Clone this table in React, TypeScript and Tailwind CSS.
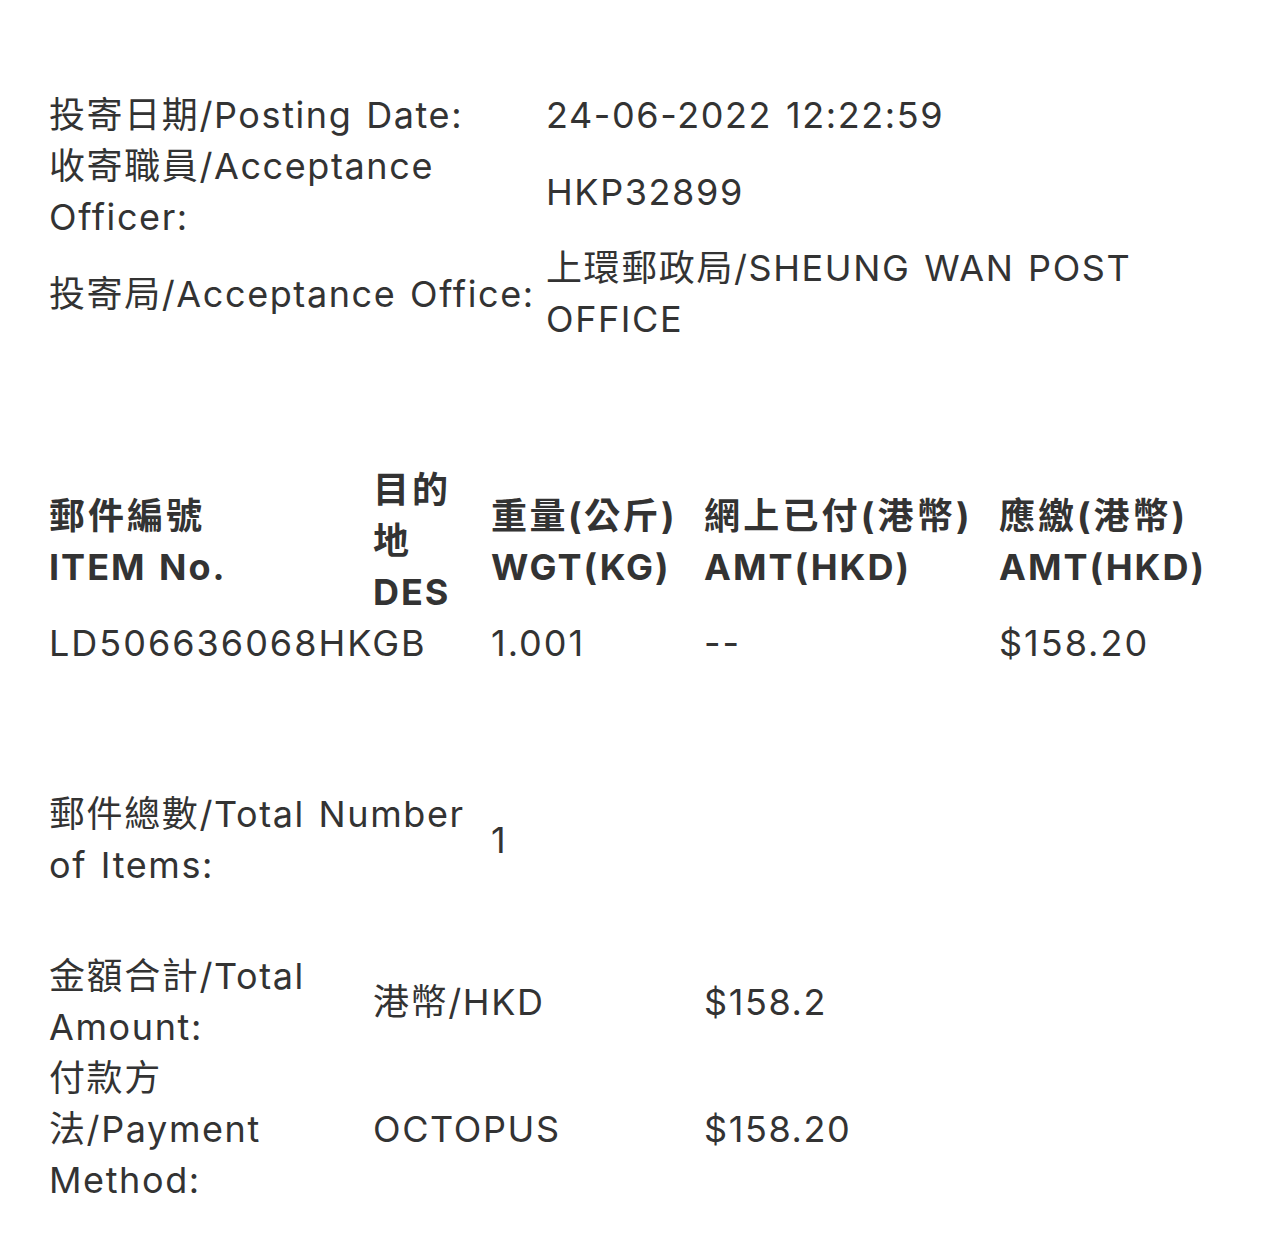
import React from "react";

const font = {
  fontFamily:
    '"Inter", "Noto Sans CJK TC", "Noto Sans", sans-serif',
};

function App() {
  return (
    <div
      className="min-h-[1248px] w-[1284px] bg-white pl-[49px] pr-[40px] pt-[90px] text-[36px] leading-[51px] tracking-[1.6px] [word-spacing:2px] text-[#333333]"
      style={font}
    >
      {/* posting info */}
      <div className="grid grid-cols-[497px_1fr]">
        <div className="whitespace-nowrap">投寄日期/Posting Date:</div>
        <div className="whitespace-nowrap">24-06-2022 12:22:59</div>

        <div className="whitespace-nowrap">
          收寄職員/Acceptance
          <br />
          Officer:
        </div>
        <div className="flex items-center whitespace-nowrap">HKP32899</div>

        <div className="flex items-center whitespace-nowrap">投寄局/Acceptance Office:</div>
        <div className="whitespace-nowrap">
          上環郵政局/SHEUNG WAN POST
          <br />
          OFFICE
        </div>
      </div>

      {/* items table */}
      <div className="mt-[120px] grid grid-cols-[324px_118px_213px_295px_1fr] font-bold">
        <div className="flex flex-col justify-center whitespace-nowrap">
          <span className="tracking-[3px]">郵件編號</span>
          <span className="tracking-[2px]">ITEM No.</span>
        </div>
        <div className="flex flex-col justify-center whitespace-nowrap">
          <span className="tracking-[3px]">目的</span>
          <span>地</span>
          <span className="tracking-[2px]">DES</span>
        </div>
        <div className="flex flex-col justify-center whitespace-nowrap">
          <span className="tracking-[2.5px]">重量(公斤)</span>
          <span className="tracking-[2px]">WGT(KG)</span>
        </div>
        <div className="flex flex-col justify-center whitespace-nowrap">
          <span className="tracking-[3.2px]">網上已付(港幣)</span>
          <span className="tracking-[2px]">AMT(HKD)</span>
        </div>
        <div className="flex flex-col justify-center whitespace-nowrap">
          <span className="tracking-[3px]">應繳(港幣)</span>
          <span className="tracking-[2px]">AMT(HKD)</span>
        </div>
      </div>
      <div className="grid grid-cols-[324px_118px_213px_295px_1fr] tracking-[2px]">
        <div className="whitespace-nowrap">LD506636068HKGB</div>
        <div></div>
        <div className="whitespace-nowrap">1.001</div>
        <div className="whitespace-nowrap">--</div>
        <div className="whitespace-nowrap">$158.20</div>
      </div>

      {/* total items */}
      <div className="mt-[120px] grid grid-cols-[442px_1fr]">
        <div className="whitespace-nowrap">
          郵件總數/Total Number
          <br />
          of Items:
        </div>
        <div className="flex items-center">1</div>
      </div>

      {/* totals */}
      <div className="mt-[60px] grid grid-cols-[324px_331px_1fr]">
        <div className="whitespace-nowrap">
          金額合計/Total
          <br />
          Amount:
        </div>
        <div className="flex items-center whitespace-nowrap">港幣/HKD</div>
        <div className="flex items-center whitespace-nowrap">$158.2</div>

        <div className="whitespace-nowrap">
          付款方
          <br />
          法/Payment
          <br />
          Method:
        </div>
        <div className="flex items-center whitespace-nowrap">OCTOPUS</div>
        <div className="flex items-center whitespace-nowrap">$158.20</div>
      </div>
    </div>
  );
}

export default App;
